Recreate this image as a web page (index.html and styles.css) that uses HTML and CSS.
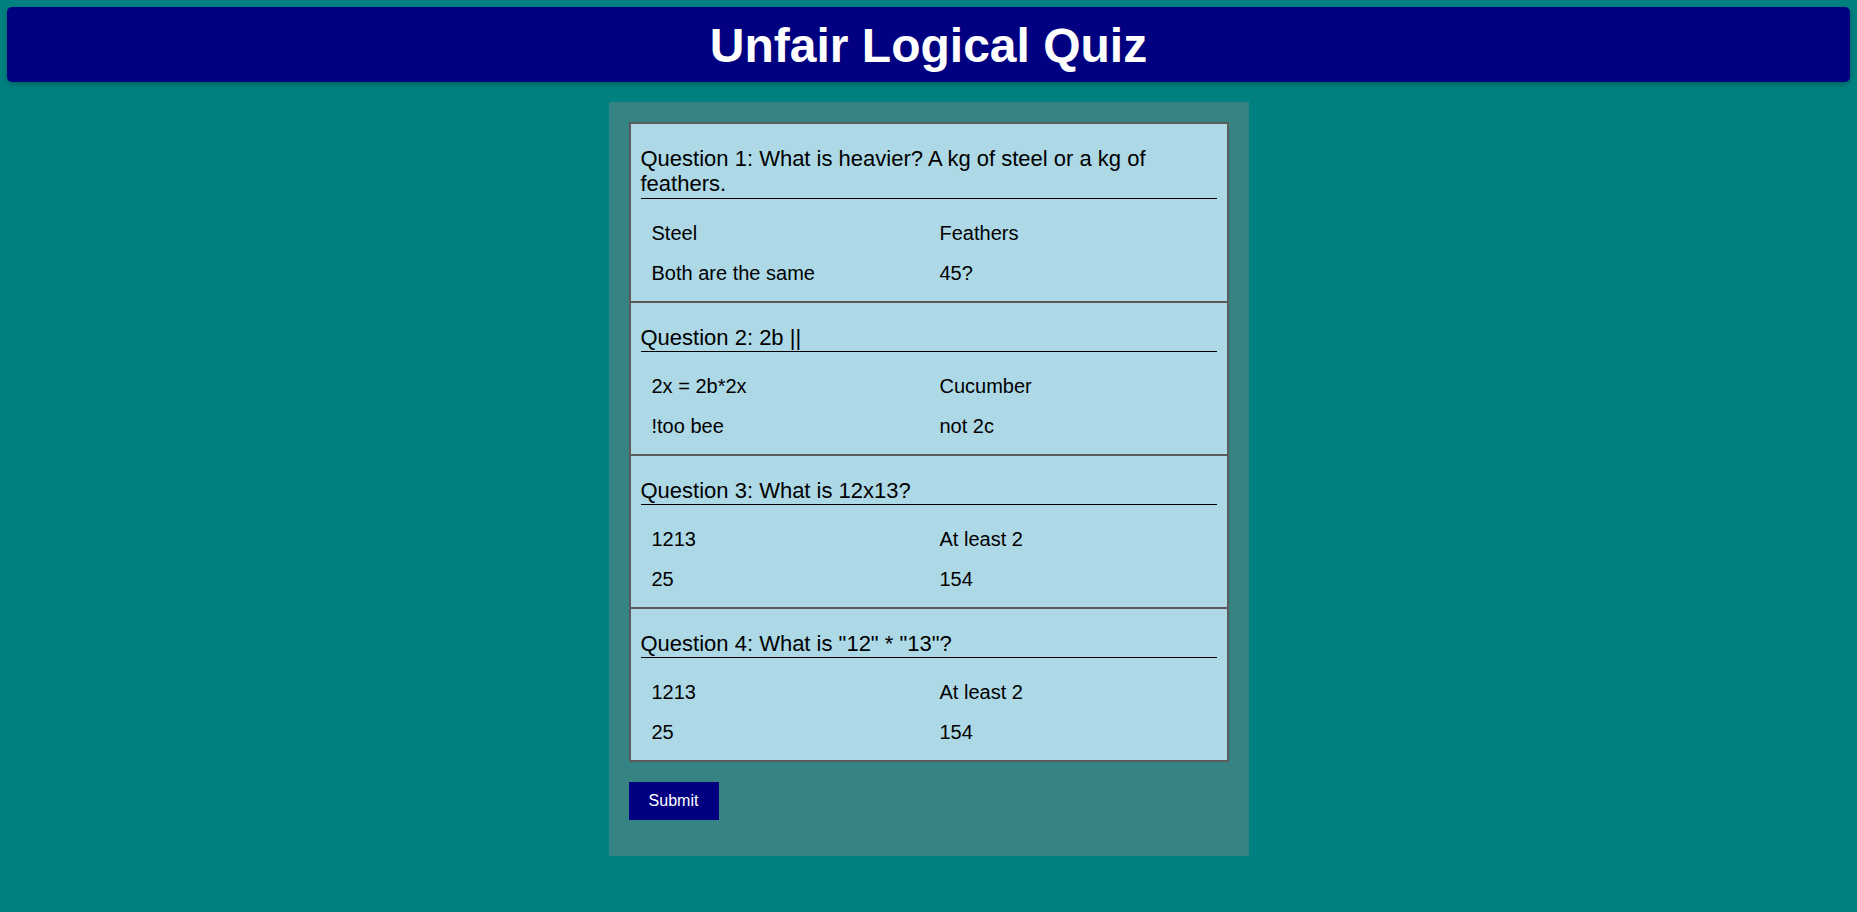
FILE: index.html
```html
<!DOCTYPE html>
<html lang="en">
<head>
<meta charset="utf-8">
<title>Unfair Logical Quiz</title>
<link rel="stylesheet" href="styles.css">
</head>
<body>
<header class="site-header">
  <h1 class="site-title">Unfair Logical Quiz</h1>
</header>
<main class="quiz-wrap">
  <form class="quiz-form">
    <div class="quiz">
      <section class="question">
        <h2 class="question-title">Question 1: What is heavier? A kg of steel or a kg of feathers.</h2>
        <div class="options">
          <label class="option">Steel</label>
          <label class="option">Feathers</label>
          <label class="option">Both are the same</label>
          <label class="option">45?</label>
        </div>
      </section>
      <section class="question">
        <h2 class="question-title">Question 2: 2b ||</h2>
        <div class="options">
          <label class="option">2x = 2b*2x</label>
          <label class="option">Cucumber</label>
          <label class="option">!too bee</label>
          <label class="option">not 2c</label>
        </div>
      </section>
      <section class="question">
        <h2 class="question-title">Question 3: What is 12x13?</h2>
        <div class="options">
          <label class="option">1213</label>
          <label class="option">At least 2</label>
          <label class="option">25</label>
          <label class="option">154</label>
        </div>
      </section>
      <section class="question">
        <h2 class="question-title">Question 4: What is "12" * "13"?</h2>
        <div class="options">
          <label class="option">1213</label>
          <label class="option">At least 2</label>
          <label class="option">25</label>
          <label class="option">154</label>
        </div>
      </section>
    </div>
    <button type="button" class="submit-btn">Submit</button>
  </form>
</main>
</body>
</html>
```

FILE: styles.css
```css
html, body {
  margin: 0;
  padding: 0;
}

body {
  background: #008080;
  font-family: "Liberation Sans", Arial, sans-serif;
  color: #000;
  min-height: 912px;
}

.site-header {
  margin: 7px 7px 0 7px;
  height: 75px;
  background: #000080;
  border-radius: 5px;
  box-shadow: 0 2px 5px rgba(0, 0, 0, 0.25);
  display: flex;
  align-items: center;
  justify-content: center;
}

.site-title {
  margin: 0;
  padding-top: 2px;
  color: #fff;
  font-size: 48px;
  font-weight: bold;
  line-height: 1;
}

.quiz-wrap {
  display: flex;
  justify-content: center;
  margin-top: 20px;
}

.quiz-form {
  width: 600px;
  padding: 20px 20px 36px 20px;
  background: #368383;
}

.quiz {
  border: 2px solid #5b5b5b;
  background: #add8e6;
}

.question {
  padding: 10px 10px 8px 10px;
}

.question + .question {
  border-top: 2px solid #5b5b5b;
}

.question-title {
  margin: 12px 0 0 0;
  font-size: 22px;
  font-weight: normal;
  line-height: 25.3px;
  padding-bottom: 1px;
  border-bottom: 1px solid #000;
}

.options {
  display: grid;
  grid-template-columns: 1fr 1fr;
  margin-top: 14px;
}

.option {
  font-size: 20px;
  line-height: 24px;
  padding: 8px 11px;
}

.submit-btn {
  display: block;
  margin-top: 20px;
  width: 90px;
  height: 38px;
  padding: 0;
  border: none;
  background: #000080;
  color: #fff;
  font-family: "Liberation Sans", Arial, sans-serif;
  font-size: 16px;
}
```
